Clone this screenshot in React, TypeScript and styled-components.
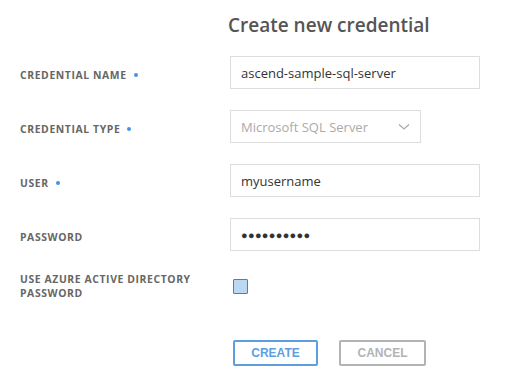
import React from "react";
import styled, { createGlobalStyle } from "styled-components";

const GlobalStyle = createGlobalStyle`
  body {
    margin: 0;
    background: #fff;
    font-family: "Open Sans", "Liberation Sans", sans-serif;
  }
`;

const Form = styled.form`
  display: grid;
  grid-template-columns: 210px 250px;
  row-gap: 21px;
  padding: 13px 0 0 20px;
  align-items: center;
`;

const Title = styled.h1`
  grid-column: 2;
  margin: 0 0 -2px -2px;
  font-size: 19px;
  font-weight: 600;
  color: #555;
  white-space: nowrap;
  line-height: 24px;
`;

const Label = styled.label<{ $wrap?: boolean }>`
  grid-column: 1;
  font-size: 10.4px;
  font-weight: 700;
  letter-spacing: 0.6px;
  color: #666;
  text-transform: uppercase;
  line-height: 14px;
  padding-right: 20px;
  padding-top: ${(p) => (p.$wrap ? 0 : 4)}px;
  display: flex;
  align-items: center;
`;

const Required = styled.span`
  display: inline-block;
  width: 4px;
  height: 4px;
  border-radius: 50%;
  background: #4a90e2;
  margin-left: 7px;
`;

const Field = styled.div<{ $width?: number }>`
  grid-column: 2;
  height: 33px;
  width: ${(p) => p.$width ?? 250}px;
  box-sizing: border-box;
  border: 1px solid #ddd;
  display: flex;
  align-items: center;
  padding: 0 10px;
  font-size: 13px;
  color: #333;
`;

const SelectText = styled.span`
  flex: 1;
  color: #aaa;
`;

const Dots = styled.span`
  font-size: 11px;
  letter-spacing: 0.3px;
  color: #333;
`;

const Check = styled.span`
  grid-column: 2;
  display: block;
  width: 15px;
  height: 15px;
  box-sizing: border-box;
  margin-left: 3px;
  background: #bcd7f2;
  border: 1px solid #777;
  border-radius: 1px;
`;

const Buttons = styled.div`
  grid-column: 2;
  display: flex;
  gap: 21px;
  margin-top: 19px;
  padding-left: 3px;
`;

const Button = styled.button<{ $primary?: boolean }>`
  height: 26px;
  box-sizing: border-box;
  padding: 0;
  width: ${(p) => (p.$primary ? 85 : 87)}px;
  background: #fff;
  border: 2px solid ${(p) => (p.$primary ? "#5b9fe1" : "#b3b3b3")};
  border-radius: 2px;
  color: ${(p) => (p.$primary ? "#5b9fe1" : "#b3b3b3")};
  font-family: "Liberation Sans", Arial, sans-serif;
  font-weight: 700;
  font-size: 12px;
`;

const Chevron = () => (
  <svg width="12" height="8" viewBox="0 0 12 8">
    <path d="M1 1.5 L6 6 L11 1.5" fill="none" stroke="#aaa" strokeWidth="1.3" />
  </svg>
);

export default function App() {
  return (
    <>
      <GlobalStyle />
      <Form>
        <Title>Create new credential</Title>

        <Label>
          Credential name
          <Required />
        </Label>
        <Field>ascend-sample-sql-server</Field>

        <Label>
          Credential type
          <Required />
        </Label>
        <Field $width={191}>
          <SelectText>Microsoft SQL Server</SelectText>
          <Chevron />
        </Field>

        <Label>
          User
          <Required />
        </Label>
        <Field>myusername</Field>

        <Label>Password</Label>
        <Field>
          <Dots>●●●●●●●●●●</Dots>
        </Field>

        <Label $wrap>Use Azure Active Directory Password</Label>
        <Check />

        <Buttons>
          <Button type="button" $primary>
            CREATE
          </Button>
          <Button type="button">CANCEL</Button>
        </Buttons>
      </Form>
    </>
  );
}
